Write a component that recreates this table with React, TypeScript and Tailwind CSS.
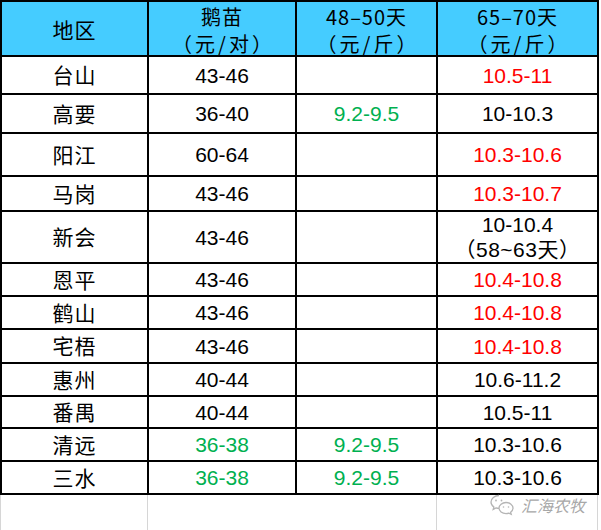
import React from "react";

type Cell = { t: string; c?: "r" | "g" | "k"; t2?: string };
type Row = [string, Cell, Cell, Cell];

const rows: Row[] = [
  ["台山", { t: "43-46" }, { t: "" }, { t: "10.5-11", c: "r" }],
  ["高要", { t: "36-40" }, { t: "9.2-9.5", c: "g" }, { t: "10-10.3" }],
  ["阳江", { t: "60-64" }, { t: "" }, { t: "10.3-10.6", c: "r" }],
  ["马岗", { t: "43-46" }, { t: "" }, { t: "10.3-10.7", c: "r" }],
  ["新会", { t: "43-46" }, { t: "" }, { t: "10-10.4", t2: "（58~63天）" }],
  ["恩平", { t: "43-46" }, { t: "" }, { t: "10.4-10.8", c: "r" }],
  ["鹤山", { t: "43-46" }, { t: "" }, { t: "10.4-10.8", c: "r" }],
  ["宅梧", { t: "43-46" }, { t: "" }, { t: "10.4-10.8", c: "r" }],
  ["惠州", { t: "40-44" }, { t: "" }, { t: "10.6-11.2" }],
  ["番禺", { t: "40-44" }, { t: "" }, { t: "10.5-11" }],
  ["清远", { t: "36-38", c: "g" }, { t: "9.2-9.5", c: "g" }, { t: "10.3-10.6" }],
  ["三水", { t: "36-38", c: "g" }, { t: "9.2-9.5", c: "g" }, { t: "10.3-10.6" }],
];

const cjk = "[font-family:'Noto_Sans_CJK_SC',sans-serif]";

function colorClass(c?: "r" | "g" | "k") {
  if (c === "r") return "text-[#ff0000]";
  if (c === "g") return "text-[#00b050]";
  return "text-black";
}

function NumCell({ cell }: { cell: Cell }) {
  return (
    <div className={`bg-white flex flex-col items-center justify-center ${colorClass(cell.c)}`}>
      <span className="[font-family:'Liberation_Sans',Arial,sans-serif] text-[21px] leading-[25px]">{cell.t}</span>
      {cell.t2 && (
        <span className="[font-family:'Liberation_Sans','Noto_Sans_CJK_SC',sans-serif] tracking-[0.5px] text-[21px] leading-[25px]">
          {cell.t2}
        </span>
      )}
    </div>
  );
}

function WeChatIcon() {
  return (
    <svg width="26" height="24" viewBox="0 0 26 24" fill="none" stroke="#b5b5b5" strokeWidth="1.3">
      <path d="M10 2.5c-4.4 0-8 2.9-8 6.5 0 2 1.1 3.8 2.9 5l-.7 2.4 2.8-1.5c.9.3 2 .5 3 .5" />
      <circle cx="7" cy="7.5" r="0.9" fill="#b5b5b5" stroke="none" />
      <circle cx="12.5" cy="7.5" r="0.9" fill="#b5b5b5" stroke="none" />
      <path d="M17 9.5c3.9 0 7 2.5 7 5.6 0 1.7-.9 3.2-2.4 4.2l.6 2-2.3-1.2c-.9.3-1.9.5-2.9.5-3.9 0-7-2.5-7-5.5s3.1-5.6 7-5.6z" />
      <circle cx="14.5" cy="14" r="0.8" fill="#b5b5b5" stroke="none" />
      <circle cx="19.5" cy="14" r="0.8" fill="#b5b5b5" stroke="none" />
    </svg>
  );
}

function HeadCell({ a, b }: { a: string; b: string }) {
  return (
    <div className={`bg-[#45ccff] flex flex-col items-center justify-center ${cjk} text-[20px] leading-[27px] text-black pt-[2px]`}>
      <span className="tracking-[1px]">{a}</span>
      <span className="tracking-[3px] pl-[3px]">{b}</span>
    </div>
  );
}

export default function App() {
  return (
    <div className="relative w-[601px] h-[530px] bg-white overflow-hidden">
      <div className="grid w-fit grid-cols-[145px_146px_139px_159px] grid-rows-[53px_36px_37px_41px_33px_50px_31px_31px_32px_31px_30px_31px_31px] gap-[2px] bg-black p-[2px]">
        <div className={`bg-[#45ccff] flex items-center justify-center ${cjk} text-[21px] tracking-[1px] text-black pt-[3px]`}>地区</div>
        <HeadCell a="鹅苗" b="（元/对）" />
        <HeadCell a="48–50天" b="（元/斤）" />
        <HeadCell a="65–70天" b="（元/斤）" />
        {rows.map((r) => (
          <React.Fragment key={r[0]}>
            <div className={`bg-white flex items-center justify-center ${cjk} text-[21px] tracking-[1px] text-black`}>{r[0]}</div>
            <NumCell cell={r[1]} />
            <NumCell cell={r[2]} />
            <NumCell cell={r[3]} />
          </React.Fragment>
        ))}
      </div>
      <div className="flex h-[40px]">
        <div className="w-[148px] border-l border-r border-[#d6d6d6]" />
        <div className="w-[289px] border-r border-[#d6d6d6]" />
        <div className="w-[161px] border-r border-[#d6d6d6]" />
      </div>
      <div className="absolute left-[489px] top-[493px] flex items-center gap-[6px]">
        <WeChatIcon />
        <span className={`${cjk} text-[16px] text-[#a8a8a8] italic`}>汇海农牧</span>
      </div>
    </div>
  );
}
